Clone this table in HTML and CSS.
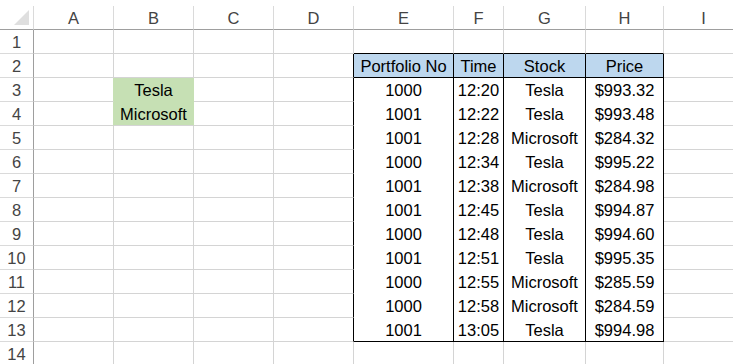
FILE: index.html
```html
<!DOCTYPE html>
<html>
<head>
<meta charset="utf-8">
<link rel="stylesheet" href="styles.css">
</head>
<body>
<div class="topstrip"></div>
<div class="sheet">
  <div class="c corner"><svg width="33" height="23" viewBox="0 0 33 23"><polygon points="14,19 29,19 29,4" fill="#dfdfdf"/></svg></div>
  <div class="c ch">A</div><div class="c ch">B</div><div class="c ch">C</div><div class="c ch">D</div><div class="c ch">E</div><div class="c ch">F</div><div class="c ch">G</div><div class="c ch">H</div><div class="c ch">I</div>

  <div class="c rh">1</div>
  <div class="c"></div><div class="c"></div><div class="c"></div><div class="c"></div>
  <div class="c tb-top"></div><div class="c tb-top"></div><div class="c tb-top"></div><div class="c tb-top"></div><div class="c"></div>

  <div class="c rh">2</div>
  <div class="c"></div><div class="c"></div><div class="c"></div><div class="c tb-left"></div>
  <div class="c th">Portfolio No</div><div class="c th">Time</div><div class="c th">Stock</div><div class="c th">Price</div><div class="c"></div>

  <div class="c rh">3</div>
  <div class="c g-left"></div><div class="c g g-first">Tesla</div><div class="c"></div><div class="c tb-left"></div>
  <div class="c t">1000</div><div class="c t">12:20</div><div class="c t">Tesla</div><div class="c t">$993.32</div><div class="c"></div>

  <div class="c rh">4</div>
  <div class="c g-left"></div><div class="c g">Microsoft</div><div class="c"></div><div class="c tb-left"></div>
  <div class="c t">1001</div><div class="c t">12:22</div><div class="c t">Tesla</div><div class="c t">$993.48</div><div class="c"></div>

  <div class="c rh">5</div>
  <div class="c"></div><div class="c"></div><div class="c"></div><div class="c tb-left"></div>
  <div class="c t">1001</div><div class="c t">12:28</div><div class="c t">Microsoft</div><div class="c t">$284.32</div><div class="c"></div>

  <div class="c rh">6</div>
  <div class="c"></div><div class="c"></div><div class="c"></div><div class="c tb-left"></div>
  <div class="c t">1000</div><div class="c t">12:34</div><div class="c t">Tesla</div><div class="c t">$995.22</div><div class="c"></div>

  <div class="c rh">7</div>
  <div class="c"></div><div class="c"></div><div class="c"></div><div class="c tb-left"></div>
  <div class="c t">1001</div><div class="c t">12:38</div><div class="c t">Microsoft</div><div class="c t">$284.98</div><div class="c"></div>

  <div class="c rh">8</div>
  <div class="c"></div><div class="c"></div><div class="c"></div><div class="c tb-left"></div>
  <div class="c t">1001</div><div class="c t">12:45</div><div class="c t">Tesla</div><div class="c t">$994.87</div><div class="c"></div>

  <div class="c rh">9</div>
  <div class="c"></div><div class="c"></div><div class="c"></div><div class="c tb-left"></div>
  <div class="c t">1000</div><div class="c t">12:48</div><div class="c t">Tesla</div><div class="c t">$994.60</div><div class="c"></div>

  <div class="c rh">10</div>
  <div class="c"></div><div class="c"></div><div class="c"></div><div class="c tb-left"></div>
  <div class="c t">1001</div><div class="c t">12:51</div><div class="c t">Tesla</div><div class="c t">$995.35</div><div class="c"></div>

  <div class="c rh">11</div>
  <div class="c"></div><div class="c"></div><div class="c"></div><div class="c tb-left"></div>
  <div class="c t">1000</div><div class="c t">12:55</div><div class="c t">Microsoft</div><div class="c t">$285.59</div><div class="c"></div>

  <div class="c rh">12</div>
  <div class="c"></div><div class="c"></div><div class="c"></div><div class="c tb-left"></div>
  <div class="c t">1000</div><div class="c t">12:58</div><div class="c t">Microsoft</div><div class="c t">$284.59</div><div class="c"></div>

  <div class="c rh">13</div>
  <div class="c"></div><div class="c"></div><div class="c"></div><div class="c tb-left"></div>
  <div class="c t t-last">1001</div><div class="c t t-last">13:05</div><div class="c t t-last">Tesla</div><div class="c t t-last">$994.98</div><div class="c"></div>

  <div class="c rh">14</div>
  <div class="c"></div><div class="c"></div><div class="c"></div><div class="c"></div>
  <div class="c"></div><div class="c"></div><div class="c"></div><div class="c"></div><div class="c"></div>
</div>
</body>
</html>
```

FILE: styles.css
```css
* { box-sizing: border-box; }
html, body { margin: 0; padding: 0; }
body {
  width: 733px;
  height: 364px;
  overflow: hidden;
  background: #ffffff;
  font-family: "Liberation Sans", Arial, sans-serif;
  font-size: 16.5px;
  color: #000000;
}
.topstrip { height: 6px; }
.sheet {
  display: grid;
  grid-template-columns: 34px 80px 80px 80px 80px 100px 50px 82px 78px 80px;
  grid-auto-rows: 24px;
}
.c {
  border-right: 1px solid #d4d4d4;
  border-bottom: 1px solid #d4d4d4;
  text-align: center;
  line-height: 21px;
  padding-top: 2px;
  white-space: nowrap;
  overflow: hidden;
}
.corner {
  padding: 0;
  border-right-color: #dadada;
  border-bottom-color: #9e9e9e;
}
.corner svg { display: block; }
.ch {
  color: #444444;
  border-right-color: #dadada;
  border-bottom-color: #9e9e9e;
}
.rh {
  color: #444444;
  border-right-color: #9e9e9e;
  border-bottom-color: #dadada;
}
.tb-top { border-bottom-color: #000000; }
.tb-left { border-right-color: #000000; }
.th {
  background: #bdd7ee;
  border-right-color: #000000;
  border-bottom-color: #000000;
}
.t {
  border-right-color: #000000;
  border-bottom: none;
}
.t-last { border-bottom: 1px solid #000000; }
.g {
  background: #c6e0b4;
  border-right-color: #c6e0b4;
}
.g-first { border-bottom: none; }
.g-left { border-right-color: #c6e0b4; }
```
